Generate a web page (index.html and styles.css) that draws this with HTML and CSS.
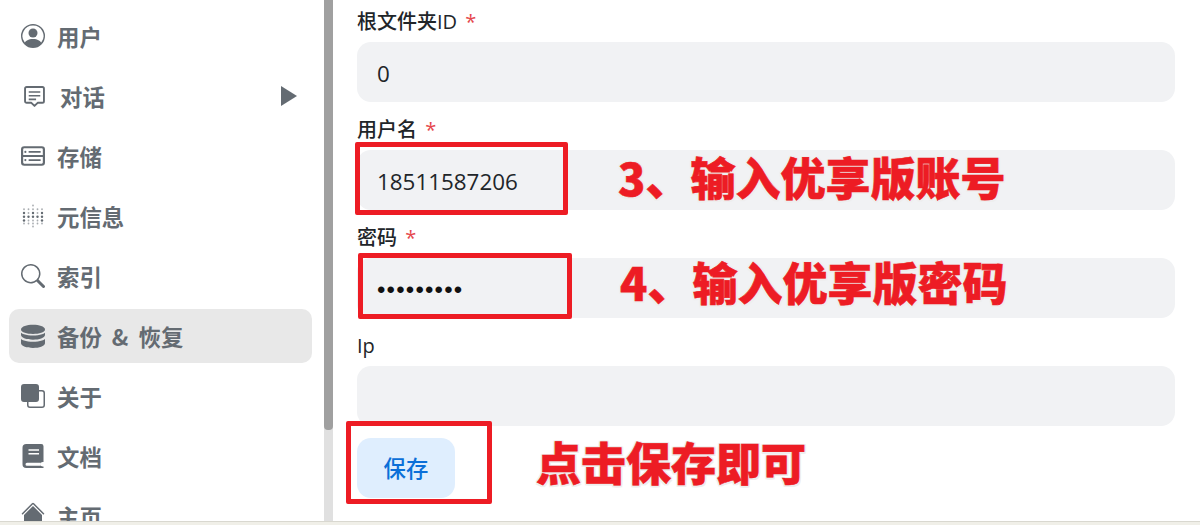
FILE: index.html
```html
<!DOCTYPE html>
<html lang="zh">
<head>
<meta charset="utf-8">
<title>备份 &amp; 恢复</title>
<link rel="stylesheet" href="styles.css">
</head>
<body>
<div class="app">
  <nav class="sidebar">
    <a class="nav-item">
      <svg class="icon" viewBox="0 0 16 16"><path d="M11 6a3 3 0 1 1-6 0 3 3 0 0 1 6 0z"/><path fill-rule="evenodd" d="M0 8a8 8 0 1 1 16 0A8 8 0 0 1 0 8zm8-7a7 7 0 0 0-5.468 11.37C3.242 11.226 4.805 10 8 10s4.757 1.225 5.468 2.37A7 7 0 0 0 8 1z"/></svg>
      <span>用户</span>
    </a>
    <a class="nav-item nav-chat">
      <svg class="icon" viewBox="0 0 20 20"><path fill="none" stroke="currentColor" stroke-width="1.800" stroke-linejoin="round" d="M2.500 1h15A1.500 1.500 0 0 1 19 2.500v12a1.500 1.500 0 0 1-1.500 1.500H13l-3 3-3-3H2.500A1.500 1.500 0 0 1 1 14.500v-12A1.500 1.500 0 0 1 2.500 1z"/><path d="M4.500 5h11v1.500h-11zM4.500 8.500h11V10h-11zM4.500 12h7v1.500h-7z"/></svg>
      <span>对话</span>
      <i class="caret"></i>
    </a>
    <a class="nav-item">
      <svg class="icon" viewBox="0 0 22 22"><path fill="none" stroke="currentColor" stroke-width="2" d="M3 3h16a2 2 0 0 1 2 2v12a2 2 0 0 1-2 2H3a2 2 0 0 1-2-2V5a2 2 0 0 1 2-2z"/><path d="M1 10h20v2H1zM7 6.500h11V8H7zM7 14h11v1.500H7z"/><circle cx="4" cy="7.250" r="1"/><circle cx="4" cy="14.750" r="1"/></svg>
      <span>存储</span>
    </a>
    <a class="nav-item">
      <svg class="icon" viewBox="0 0 16 16"><g class="dots-light"><circle cx="8" cy="1" r=".6"/><circle cx="8" cy="15" r=".6"/><circle cx="2" cy="3.500" r=".6"/><circle cx="5" cy="3.500" r=".6"/><circle cx="8" cy="3.500" r=".6"/><circle cx="11" cy="3.500" r=".6"/><circle cx="14" cy="3.500" r=".6"/><circle cx="5" cy="6" r=".6"/><circle cx="11" cy="6" r=".6"/><circle cx="5" cy="11" r=".6"/><circle cx="8" cy="11" r=".6"/><circle cx="11" cy="11" r=".6"/><circle cx="2" cy="13" r=".6"/><circle cx="5" cy="13" r=".6"/><circle cx="8" cy="13" r=".6"/><circle cx="11" cy="13" r=".6"/><circle cx="14" cy="13" r=".6"/></g><circle cx="2" cy="6" r=".8"/><circle cx="8" cy="6" r=".8"/><circle cx="14" cy="6" r=".8"/><circle cx="2" cy="8.500" r=".8"/><circle cx="5" cy="8.500" r=".8"/><circle cx="8" cy="8.500" r=".8"/><circle cx="11" cy="8.500" r=".8"/><circle cx="14" cy="8.500" r=".8"/><circle cx="2" cy="11" r=".8"/><circle cx="14" cy="11" r=".8"/></svg>
      <span>元信息</span>
    </a>
    <a class="nav-item">
      <svg class="icon" viewBox="0 0 16 16"><path d="M11.742 10.344a6.500 6.500 0 1 0-1.397 1.398h-.001c.03.04.062.078.098.115l3.850 3.850a1 1 0 0 0 1.415-1.414l-3.850-3.850a1.007 1.007 0 0 0-.115-.100zM12 6.500a5.500 5.500 0 1 1-11 0 5.500 5.500 0 0 1 11 0z"/></svg>
      <span>索引</span>
    </a>
    <a class="nav-item nav-backup active">
      <svg class="icon" viewBox="2 0.500 12 15.500" preserveAspectRatio="none"><path d="M3.904 1.777C4.978 1.289 6.427 1 8 1s3.022.289 4.096.777C13.125 2.245 14 2.993 14 4s-.875 1.755-1.904 2.223C11.022 6.711 9.573 7 8 7s-3.022-.289-4.096-.777C2.875 5.755 2 5.007 2 4s.875-1.755 1.904-2.223z"/><path d="M2 6.161V7.600c0 1.007.875 1.755 1.904 2.223C4.978 10.310 6.427 10.600 8 10.600s3.022-.289 4.096-.777C13.125 9.355 14 8.607 14 7.600V6.161c-.457.432-1.004.751-1.490.972C11.278 7.693 9.682 8 8 8s-3.278-.307-4.510-.867c-.486-.220-1.033-.540-1.490-.972z"/><path d="M2 10.200v2.800c0 1.007.875 1.755 1.904 2.223C4.978 15.711 6.427 16 8 16s3.022-.289 4.096-.777C13.125 14.755 14 14.007 14 13v-2.800c-.457.432-1.004.751-1.490.972-1.232.560-2.828.867-4.510.867s-3.278-.307-4.510-.867c-.486-.220-1.033-.540-1.490-.972z"/></svg>
      <span>备份 &amp; 恢复</span>
    </a>
    <a class="nav-item">
      <svg class="icon" viewBox="0 0 16 16"><path d="M0 2a2 2 0 0 1 2-2h8a2 2 0 0 1 2 2v2h2a2 2 0 0 1 2 2v8a2 2 0 0 1-2 2H6a2 2 0 0 1-2-2v-2H2a2 2 0 0 1-2-2V2zm5 10v2a1 1 0 0 0 1 1h8a1 1 0 0 0 1-1V6a1 1 0 0 0-1-1h-2v5a2 2 0 0 1-2 2H5z"/></svg>
      <span>关于</span>
    </a>
    <a class="nav-item">
      <svg class="icon" viewBox="0 0 16 16"><path d="M1 2.500A2.500 2.500 0 0 1 3.500 0h10a1.500 1.500 0 0 1 1.500 1.500v10.500h-.5a1.500 1.500 0 0 0 0 3h.5v1H3.500A2.500 2.500 0 0 1 1 13.500V2.500zM3 13.500a1 1 0 0 0 1 1h9.200a2.400 2.400 0 0 1 0-2H4a1 1 0 0 0-1 1zM5 3.500v1h7v-1H5zm0 2.500v1h7V6H5z" fill-rule="evenodd"/></svg>
      <span>文档</span>
    </a>
    <a class="nav-item nav-home">
      <svg class="icon" viewBox="0 0 16 16"><path d="M8 3.293l6 6V13.500a1.500 1.500 0 0 1-1.500 1.500h-9A1.500 1.500 0 0 1 2 13.500V9.293l6-6z"/><path d="M7.293 1.500a1 1 0 0 1 1.414 0l6.647 6.646a.5.5 0 0 1-.708.708L8 2.207 1.354 8.854a.5.5 0 1 1-.708-.708L7.293 1.500z"/></svg>
      <span>主页</span>
    </a>
  </nav>
  <div class="scrollbar"><div class="scrollbar-thumb"></div></div>
  <main class="content">
    <form class="form">
      <div class="field">
        <label class="field-label">根文件夹ID <em>*</em></label>
        <div class="input">0</div>
      </div>
      <div class="field">
        <label class="field-label">用户名 <em>*</em></label>
        <div class="input">18511587206</div>
      </div>
      <div class="field">
        <label class="field-label">密码 <em>*</em></label>
        <div class="input input-password">•••••••••</div>
      </div>
      <div class="field">
        <label class="field-label">Ip</label>
        <div class="input"></div>
      </div>
      <button class="save" type="button">保存</button>
    </form>
    <div class="mark mark-user"></div>
    <div class="mark mark-pass"></div>
    <div class="mark mark-save"></div>
    <div class="note note-user">3、输入优享版账号</div>
    <div class="note note-pass">4、输入优享版密码</div>
    <div class="note note-save">点击保存即可</div>
  </main>
</div>
<div class="bottom-strip"></div>
</body>
</html>
```

FILE: styles.css
```css
* { box-sizing: border-box; }
html, body { margin: 0; height: 525px; overflow: hidden; background: #fff; }
body {
  display: flex;
  flex-direction: column;
  font-family: "Open Sans", "Noto Sans CJK SC", sans-serif;
  color: #212529;
}
.app { flex: 1; display: flex; min-height: 0; overflow: hidden; }
.bottom-strip { height: 4px; background: #f0efe8; border-top: 1px solid #d9d8d0; }

.sidebar {
  width: 324px;
  flex: none;
  padding: 9px 12px 0 9px;
  display: flex;
  flex-direction: column;
  gap: 6px;
}
.nav-item {
  flex: none;
  height: 54px;
  padding: 0 12px;
  display: flex;
  align-items: center;
  gap: 12px;
  border-radius: 10px;
  color: #646b72;
  font-family: "Noto Sans CJK SC", sans-serif;
  font-size: 22.4px;
  font-weight: 700;
}
.nav-item.active { background: #e8e8e8; }
.icon { width: 24px; height: 24px; flex: none; fill: currentColor; }
.dots-light { opacity: .55; }
.nav-chat { padding-left: 15px; gap: 15px; }
.nav-chat .icon { width: 21px; height: 21px; }
.nav-backup { word-spacing: 5px; }
.nav-home .icon { margin-top: -6px; }
.caret {
  margin-left: auto;
  margin-right: 3px;
  border-left: 16px solid #646b72;
  border-top: 10.500px solid transparent;
  border-bottom: 10.500px solid transparent;
}

.scrollbar { width: 9px; flex: none; background: #e0e0e0; }
.scrollbar-thumb { height: 430px; background: #a0a0a0; border-radius: 0 0 4px 4px; }

.content { position: relative; flex: 1; padding: 8px 25px 0 24px; min-width: 0; }
.form { display: flex; flex-direction: column; }
.field { height: 108px; }
.field-label {
  display: block;
  height: 34px;
  font-size: 20px;
  font-weight: 500;
  line-height: 28px;
}
.field-label em { font-style: normal; color: #e5484d; margin-left: 3px; }
.input {
  height: 60px;
  padding: 0 20px;
  background: #f1f2f4;
  border-radius: 14px;
  font-size: 22.4px;
  line-height: 63px;
}
.input-password {
  font-size: 24px;
  letter-spacing: 1.200px;
  font-family: "Liberation Sans", sans-serif;
  color: #111;
}
.save {
  margin-top: -2px;
  width: 98px;
  height: 60px;
  padding: 0 0 3px;
  border: 0;
  border-radius: 14px;
  background: #dfeefe;
  color: #0b6fd8;
  font-family: "Noto Sans CJK SC", sans-serif;
  font-size: 22.4px;
  font-weight: 500;
}

.mark { position: absolute; border: 5px solid #ed1c24; border-radius: 2px; }
.mark-user { left: 22px; top: 142px; width: 213px; height: 73px; }
.mark-pass { left: 25px; top: 253px; width: 214px; height: 66px; }
.mark-save { left: 13px; top: 421px; width: 146px; height: 83px; }

.note {
  position: absolute;
  color: #ed1c24;
  font-family: "Noto Sans CJK SC", sans-serif;
  font-size: 45px;
  font-weight: 900;
  line-height: 60px;
  white-space: nowrap;
  -webkit-text-stroke: .6px #ed1c24;
  text-shadow: 1.500px 0 #eeeeee, -1.500px 0 #eeeeee, 0 1.500px #eeeeee, 0 -1.500px #eeeeee, 1.500px 1.500px #eeeeee, -1.500px -1.500px #eeeeee, 1.500px -1.500px #eeeeee, -1.500px 1.500px #eeeeee;
}
.note-user { left: 285px; top: 147px; }
.note-pass { left: 287px; top: 252px; }
.note-save { left: 203px; top: 432px; }
```
